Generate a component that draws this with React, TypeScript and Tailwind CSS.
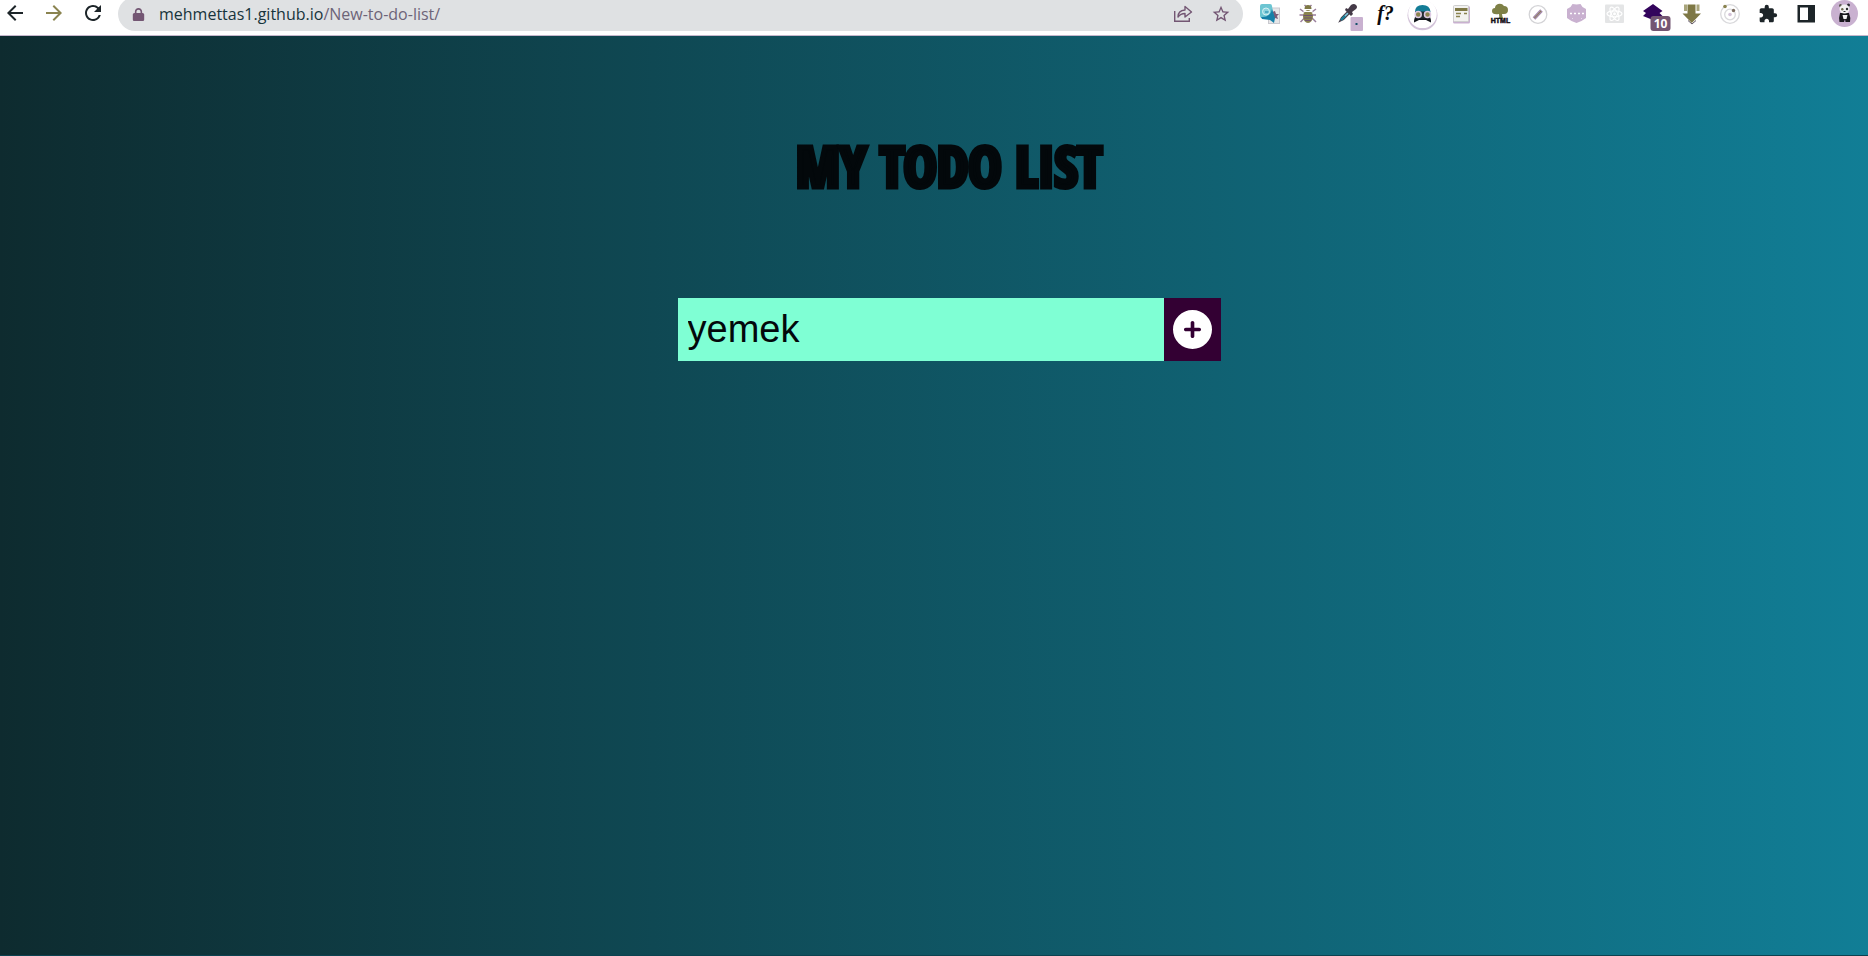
import { useState } from "react";
import type { ReactNode } from "react";
import { FaCirclePlus, FaLock } from "react-icons/fa6";
import { MdArrowBack, MdArrowForward, MdExtension, MdRefresh, MdStarBorder } from "react-icons/md";

type Extension = { name: string; art: ReactNode };

const extensions: Extension[] = [
  {
    name: "Translate",
    art: (
      <>
        <rect x="17.500" y="8" width="11" height="15.500" fill="#e6e6e8" stroke="#c9c9cf" />
        <path d="m24 11 1 3 3 0-2 2 1 3-3-1-3 1V12Z" fill="#7a5c78" />
        <path d="M9 6q0-2 2-2h8q2 0 2 2l2 12H11q-2 0-2-2Z" fill="#6cc5d2" />
        <path d="M10 17q9 1 11-8l3 9-1 5-4-3-8-1Z" fill="#1580a8" />
        <circle cx="15" cy="11.500" r="3.500" fill="#8bd3dd" stroke="#d8f1f4" />
        <path d="M14 12h3.500" stroke="#1580a8" />
      </>
    ),
  },
  {
    name: "Bug finder",
    art: (
      <>
        <path d="m11 9 4 3m12-3-4 3M10.500 15H27M11.500 22l4-4m11.500 4-4-4M15.500 5l2 2m5-2-2 2" stroke="#9a7f9c" strokeWidth="1.500" />
        <path d="M15.500 9q0-4 3.500-4t3.500 4Z" fill="#7e7845" />
        <ellipse cx="19" cy="16.500" rx="5" ry="6.500" fill="#8a834f" />
        <path d="M14.500 11.500h9" stroke="#fff" />
        <path d="M15 18h8m-7 2.500h6M14.500 15.500h9" stroke="#6f5270" />
      </>
    ),
  },
  {
    name: "Color picker",
    art: (
      <>
        <path d="m11.500 21.500 2-4 6-6 2 2-6 6Z" fill="#7cc8de" stroke="#4b4450" strokeWidth="1.200" />
        <path d="m13 20 4-4" stroke="#137c96" strokeWidth="2" />
        <path d="m18 8 2 1 3-4q3-2 5 0t0 4l-4 3 1 2-2 2-6-6Z" fill="#443a47" />
        <rect x="22.500" y="17" width="12.500" height="14" rx="1" fill="#c9b1d0" />
        <path d="M28.500 23v2" stroke="#15506b" strokeWidth="2" />
      </>
    ),
  },
  {
    name: "Font finder",
    art: (
      <text x="19.500" y="20" textAnchor="middle" fontFamily="Liberation Serif, serif" fontSize="20" fontStyle="italic" fontWeight="700" fill="#0a0a0c">
        f?
      </text>
    ),
  },
  {
    name: "Incognito helper",
    art: (
      <>
        <circle cx="18.500" cy="15.300" r="15" fill="#d3c3d9" />
        <circle cx="18.500" cy="13.800" r="14.300" fill="#fff" />
        <path d="M11 12q0-7 7.500-7t8 7Z" fill="#137c96" />
        <path d="M10 22.500q0-6 3-7.500h11q3 1 3 7.500l-5-2.500h-7Z" fill="#0f1318" />
        <path d="M11 11.500h15v7H11Z" fill="#222b31" />
        <circle cx="14.200" cy="14.500" r="3" fill="#8a834f" stroke="#dcc9e2" strokeWidth="1.500" />
        <circle cx="23.500" cy="14.500" r="3" fill="#8a834f" stroke="#dcc9e2" strokeWidth="1.500" />
      </>
    ),
  },
  {
    name: "Page notes",
    art: (
      <>
        <rect x="11" y="6" width="17" height="17.500" rx="1.500" fill="#c9b1d0" />
        <rect x="11.500" y="5.500" width="15" height="16" rx="1" fill="#f2f2f0" stroke="#cfcfcf" />
        <path d="M13 9.500h12.500" stroke="#7e7845" strokeWidth="3" />
        <path d="M14 13.500h5m-5 3h4m4-3h3" stroke="#8a834f" strokeWidth="1.300" />
      </>
    ),
  },
  {
    name: "HTML tree",
    art: (
      <>
        <path d="M17 4q4-1 6 2 4 0 4 4t-4 4h-2q0 3 2 5h-6q2-2 1-5-7 1-7-3 0-3 3-3 0-3 3-4Z" fill="#7e8046" />
        <text x="19.500" y="23" textAnchor="middle" fontFamily="Liberation Sans, sans-serif" fontSize="7" fontWeight="700" fill="#17131a" stroke="#17131a" strokeWidth=".5">
          HTML
        </text>
      </>
    ),
  },
  {
    name: "Pen",
    art: (
      <>
        <circle cx="19" cy="14.500" r="8.800" fill="#fff" stroke="#d3d3d6" strokeWidth="1.300" />
        <path d="m15 18.500 7.500-8" stroke="#a58aaa" strokeWidth="3.600" />
        <path d="m15.500 18 6.500-7" stroke="#8a834f" />
      </>
    ),
  },
  {
    name: "Chat",
    art: (
      <>
        <path d="m15.500 4 4 .5 4-.5 2 3 3.500 2v9l-4.500 3-5 2-5-2-4.500-3V9l3.500-2Z" fill="#c9b1d0" />
        <path d="M13 13.500h14" stroke="#fff" strokeWidth="1.500" strokeDasharray="2 2" />
        <path d="m15 19 1-1m8 0 1 1" stroke="#e6d9ea" />
      </>
    ),
  },
  {
    name: "React tools",
    art: (
      <>
        <rect x="10" y="4.500" width="19" height="18.500" rx="1" fill="#e4e5e6" />
        <g fill="none" stroke="#fff" strokeWidth="1.200">
          <ellipse cx="19.500" cy="13.800" rx="7.500" ry="3" />
          <ellipse cx="19.500" cy="13.800" rx="7.500" ry="3" transform="rotate(60 19.500 13.800)" />
          <ellipse cx="19.500" cy="13.800" rx="7.500" ry="3" transform="rotate(120 19.500 13.800)" />
        </g>
        <circle cx="19.500" cy="13.800" r="1.500" fill="#fff" />
      </>
    ),
  },
  {
    name: "Layers, 10 items",
    art: (
      <>
        <path d="m19 4 9.500 7-3 2 3 3-9.500 4-10-4 3-3-3-2Z" fill="#33045c" />
        <rect x="16.500" y="16" width="20" height="15" rx="3" fill="#735673" />
        <text x="26.500" y="28" textAnchor="middle" fontFamily="Open Sans, sans-serif" fontSize="12" fontWeight="700" fill="#fff">
          10
        </text>
      </>
    ),
  },
  {
    name: "Downloader",
    art: (
      <>
        <path d="M12 4.500h3V11h-3Zm12.500 0h3V11h-3Z" fill="#a9a57c" />
        <path d="M15.500 4.500h8v9H29L19.800 23l-9.300-9.500h5Z" fill="#7e7845" />
        <path d="m16 20.500 4 3.500 4-3.500" fill="none" stroke="#5f5562" />
      </>
    ),
  },
  {
    name: "Orbit",
    art: (
      <>
        <g fill="none" stroke="#d9d9dc" strokeWidth="1.300">
          <circle cx="20" cy="14" r="9.300" />
          <circle cx="20" cy="14.500" r="5.300" />
        </g>
        <circle cx="20" cy="14.500" r="1.800" fill="#d4c4d9" />
        <circle cx="15" cy="6.500" r="1.800" fill="#8a834f" />
        <circle cx="23.500" cy="10.500" r="1.700" fill="#7d6d60" />
      </>
    ),
  },
  { name: "Extensions", art: <MdExtension x={10} y={4} size={20} color="#1d2529" /> },
  {
    name: "Side panel",
    art: (
      <>
        <rect x="10.500" y="5" width="17.500" height="17.500" fill="#1d2529" />
        <rect x="13" y="7.500" width="8" height="12.500" fill="#fff" />
      </>
    ),
  },
  {
    name: "Profile",
    art: (
      <>
        <circle cx="19.500" cy="13.500" r="13.500" fill="#c9b1d0" />
        <path d="M15 13h9q2 5 1 9h-4.500l-.5-3-1 3h-4.500q-1-4 .5-9Z" fill="#17181c" />
        <path d="M17.500 15h5l-1 4h-3Z" fill="#f3f3f3" />
        <circle cx="15.500" cy="5.500" r="1.500" fill="#55564a" />
        <circle cx="23.500" cy="5" r="1.500" fill="#2a2c30" />
        <ellipse cx="19.500" cy="9" rx="5" ry="4.500" fill="#f3f3f3" />
        <circle cx="17.300" cy="9.300" r="1.200" fill="#6d6a50" />
        <circle cx="22" cy="9" r="1.200" fill="#2a2c30" />
        <path d="M18.500 11.500h2" stroke="#2a2c30" />
      </>
    ),
  },
];

function BrowserBar() {
  return (
    <header className="flex h-[36px] items-start overflow-hidden border-b border-[#c5b6cc] bg-white pr-[5px] pl-[3px] text-[#1d2529]">
      <nav className="mt-[1px] flex gap-[15px]">
        <button aria-label="Back"><MdArrowBack size={24} /></button>
        <button aria-label="Forward" className="text-[#8a834f]"><MdArrowForward size={24} /></button>
        <button aria-label="Reload"><MdRefresh size={24} /></button>
      </nav>
      <div className="-mt-[3px] ml-[13px] flex h-[34px] min-w-0 flex-1 items-center rounded-full bg-[#dfe1e3] pr-[12px] pl-[14px]">
        <FaLock size={13} className="mr-[2px] shrink-0 text-[#735673]" />
        <p className="ml-[12px] flex-1 truncate font-['Open_Sans',sans-serif] text-[16px] leading-[22px] text-[#17343c]">
          mehmettas1.github.io<span className="text-[#6d6478]">/New-to-do-list/</span>
        </p>
        <button aria-label="Share" className="mr-[18px] text-[#735673]">
          <svg width="20" height="20" viewBox="0 0 20 20" fill="none" stroke="currentColor" strokeWidth="1.400">
            <path d="M1.700 7v10.300h14.600V14" />
            <path d="M5 13q0-6.500 7-7V2.500L18.500 8 12 13V9.500q-4.500 0-7 3.500Z" strokeLinejoin="round" />
          </svg>
        </button>
        <button aria-label="Bookmark" className="text-[#735673]"><MdStarBorder size={20} /></button>
      </div>
      <ul className="ml-[8px] flex w-[612px] shrink-0">
        {extensions.map(({ name, art }) => (
          <li key={name} className="flex flex-1 justify-center">
            <button aria-label={name}>
              <svg width="38" height="35" viewBox="0 0 38 35">{art}</svg>
            </button>
          </li>
        ))}
      </ul>
    </header>
  );
}

export default function App() {
  const [task, setTask] = useState("yemek");

  return (
    <div className="flex min-h-screen flex-col bg-white">
      <BrowserBar />
      <main className="flex flex-1 flex-col items-center border-b border-[#0c4250] bg-linear-to-r/srgb from-[#0e2b2f] to-[#117e96] pt-[93px] pl-[30px]">
        <h1 className="font-['Open_Sans_Condensed','Roboto_Condensed',sans-serif] text-[56px] leading-[72px] font-bold text-[#03080b] [-webkit-text-stroke:5px_#03080b]">
          MY TODO LIST
        </h1>
        <form className="mt-[97px] flex h-[63px]" onSubmit={(event) => event.preventDefault()}>
          <input
            aria-label="New task"
            value={task}
            onChange={(event) => setTask(event.target.value)}
            className="w-[486px] bg-[#7fffd4] px-[10px] font-['Liberation_Sans',sans-serif] text-[38px] text-[#03080b] outline-none"
          />
          <button type="submit" aria-label="Add task" className="flex w-[57px] items-center justify-center bg-[#330033] text-white">
            <FaCirclePlus size={39} />
          </button>
        </form>
      </main>
    </div>
  );
}
